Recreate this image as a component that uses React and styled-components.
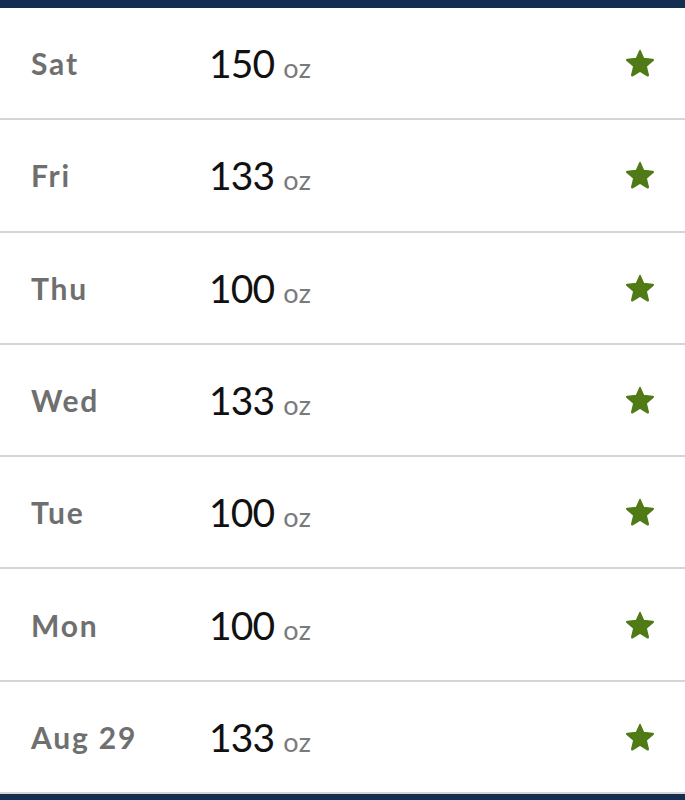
import { createGlobalStyle, styled } from "styled-components";

const GlobalStyle = createGlobalStyle`
  html, body {
    margin: 0;
    padding: 0;
    background: #ffffff;
  }
  body {
    font-family: Lato, "Open Sans", sans-serif;
  }
`;

const Screen = styled.div`
  width: 685px;
  height: 800px;
  display: flex;
  flex-direction: column;
  background: #ffffff;
  overflow: hidden;
`;

const NavyBar = styled.div`
  height: ${(p) => p.$h}px;
  flex: 0 0 auto;
  background: #142e52;
`;

const List = styled.div`
  flex: 1;
  display: flex;
  flex-direction: column;
`;

const Row = styled.div`
  height: 110.3px;
  flex: 0 0 auto;
  display: grid;
  grid-template-columns: 178px 1fr 60px;
  align-items: center;
  padding-left: 31px;
  border-bottom: 2px solid #d5d5d5;
`;

const Day = styled.div`
  font-size: 30px;
  font-weight: 700;
  color: #6f6f6f;
  letter-spacing: 1.8px;
`;

const Amount = styled.div`
  display: flex;
  align-items: baseline;
  gap: 9px;
`;

const Value = styled.span`
  font-size: 39px;
  font-weight: 400;
  color: #111111;
  letter-spacing: -0.9px;
`;

const Unit = styled.span`
  font-size: 27px;
  color: #7a7a7a;
  letter-spacing: 0.5px;
`;

const StarBox = styled.div`
  display: flex;
  justify-content: flex-start;
  align-items: center;
`;

const Star = () => (
  <svg width="30" height="28" viewBox="0 0 30 28">
    <path
      d="M15 1.5 L18.6 9.6 L27.6 10.4 Q28.8 10.6 27.9 11.5 L21.2 17.3 L23.2 26 Q23.4 27.2 22.3 26.6 L15 22 L7.7 26.6 Q6.6 27.2 6.8 26 L8.8 17.3 L2.1 11.5 Q1.2 10.6 2.4 10.4 L11.4 9.6 Z"
      fill="#4f7a16"
      stroke="#4f7a16"
      strokeWidth="1.5"
      strokeLinejoin="round"
    />
  </svg>
);

const entries = [
  { day: "Sat", value: 150 },
  { day: "Fri", value: 133 },
  { day: "Thu", value: 100 },
  { day: "Wed", value: 133 },
  { day: "Tue", value: 100 },
  { day: "Mon", value: 100 },
  { day: "Aug 29", value: 133 },
];

export default function App() {
  return (
    <Screen>
      <GlobalStyle />
      <NavyBar $h={8} />
      <List>
        {entries.map((e) => (
          <Row key={e.day}>
            <Day>{e.day}</Day>
            <Amount>
              <Value>{e.value}</Value>
              <Unit>oz</Unit>
            </Amount>
            <StarBox>
              <Star />
            </StarBox>
          </Row>
        ))}
      </List>
      <NavyBar $h={8} />
    </Screen>
  );
}
